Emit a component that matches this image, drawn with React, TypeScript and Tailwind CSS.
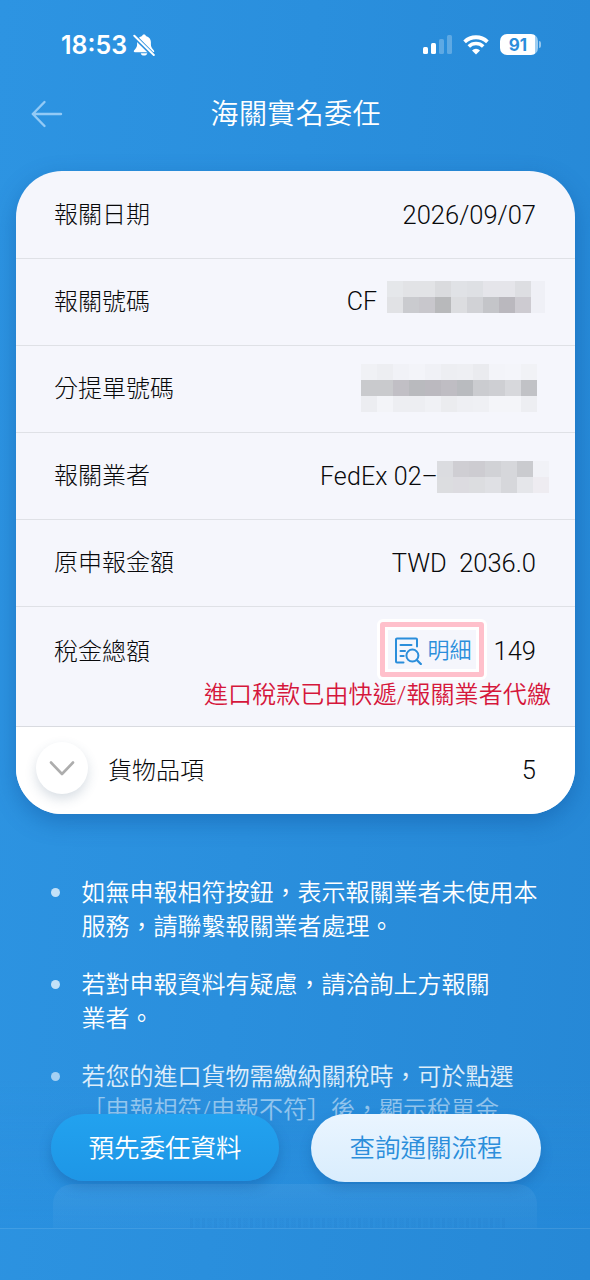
import type { ReactNode } from 'react';

const MASK_DECLARATION = [
  ['#e5e7ea', '#e2e3e6', '#e2e3e6', '#dadbde', '#e0e2e6', '#dee0e4', '#e5e5ea', '#e5e5ea', '#dddee2', '#eff0f6'],
  ['#e1e2e5', '#cacbcf', '#c8c7cc', '#b8b9bb', '#dcdde0', '#d1d2d6', '#c4c5c9', '#bab8be', '#cdcbd1', '#eff0f6'],
];

const MASK_WAYBILL = [
  ['#f0f1f5', '#edeef2', '#f1f2f7', '#f3f4f9', '#f0f1f6', '#edeef2', '#eeeff3', '#eaebef', '#f3f4f9', '#f4f5fa', '#f1f2f6'],
  ['#c9cacd', '#c9cacd', '#c1bfc5', '#b9babe', '#bbb9bf', '#bfbdc3', '#b9bbbf', '#cbccd0', '#cecfd3', '#d7d8dc', '#c1c2c6'],
  ['#ecedf1', '#f3f4f8', '#edeef2', '#edeef2', '#f0f1f5', '#ebecef', '#eeeff3', '#eff0f4', '#f4f5f9', '#f4f5f9', '#edeef2'],
];

const MASK_BROKER = [
  ['#dbdce0', '#cfced3', '#cdccd1', '#d1d2d6', '#d6d7db', '#cacbcf', '#f1f2f7'],
  ['#dcdde0', '#dcdbe0', '#dcdde0', '#dfe0e4', '#d6d7db', '#e5e6ea', '#eeecf1'],
];

function Mosaic({ rows, lastNarrow, className = '' }: { rows: string[][]; lastNarrow?: boolean; className?: string }) {
  return (
    <span className={`block shrink-0 ${className}`}>
      {rows.map((row, y) => (
        <span key={y} className="flex">
          {row.map((color, x) => (
            <span
              key={x}
              className={`block h-4 ${lastNarrow && x === row.length - 1 ? 'w-3.5' : 'w-4'}`}
              style={{ backgroundColor: color }}
            />
          ))}
        </span>
      ))}
    </span>
  );
}

function Row({ label, children, className = 'pr-[39px]' }: { label: string; children: ReactNode; className?: string }) {
  return (
    <div className={`flex h-[87px] items-center justify-between border-b border-[#dfe1e6] pl-[38.5px] ${className}`}>
      <span className="text-[24px] leading-8">{label}</span>
      <div className="flex items-center text-[25.5px] leading-8 whitespace-pre">{children}</div>
    </div>
  );
}

function StatusBar() {
  return (
    <div className="flex h-[88px] items-center pl-[61px] pr-[49px] pt-px text-white">
      <span className="font-[Inter] text-[25px] font-semibold leading-8">18:53</span>
      <svg className="ml-[6px]" width="22" height="22" viewBox="0 0 22 22" fill="currentColor">
        <path d="M11 0.5c-1.200 0-1.800.7-1.900 1.500C5.800 2.800 4.200 5.200 4.100 8v2.500c0 2.200-.9 3.500-2.400 5.200-.8.900-1 1.300-.9 1.900.1.500.5.700 1.200.7h18c.7 0 1.200-.2 1.200-.8 0-.5-.2-.9-.9-1.700-1.500-1.700-2.400-3-2.400-5.300V8c-.1-2.800-1.700-5.200-5-6C12.800 1.200 12.200.5 11 .5zM7.700 19.300h6.600c-.3 1.400-1.600 2.300-3.300 2.300s-3-.9-3.300-2.300z" />
        <path d="M0 0.800 21.200 22" stroke="#2b90df" strokeWidth="4.400" />
        <path d="M1.300 1.800 20.800 21" stroke="currentColor" strokeWidth="2" strokeLinecap="round" />
      </svg>
      <div className="ml-auto flex items-center">
        <div className="flex h-[19px] items-end gap-[2.500px]">
          <span className="h-[7px] w-[5.500px] rounded-[1.500px] bg-white" />
          <span className="h-[11px] w-[5.500px] rounded-[1.500px] bg-white" />
          <span className="h-[15px] w-[5.500px] rounded-[1.500px] bg-white/25" />
          <span className="h-[19px] w-[5.500px] rounded-[1.500px] bg-white/25" />
        </div>
        <svg className="ml-[11px]" width="26" height="20" viewBox="0 0 26 20" fill="none" stroke="currentColor">
          <path d="M1.600 6.800a16.600 16.600 0 0 1 22.800 0" strokeWidth="3.800" />
          <path d="M5.800 11.500a10.300 10.300 0 0 1 14.400 0" strokeWidth="3.600" />
          <path d="M13 19.500 9 15.400a5.600 5.600 0 0 1 8 0z" fill="currentColor" stroke="none" />
        </svg>
        <div className="ml-[11px] flex h-[21px] w-[38px] items-center justify-center rounded-[7px] bg-[linear-gradient(90deg,#fff_91%,#9dcdf1_91%)] pr-0.5 pt-px font-[Inter] text-[17px] font-bold leading-[20px] text-[#2a8ddb]">
          91
        </div>
        <span className="ml-[1px] h-[7px] w-[2px] rounded-r-full bg-white/50" />
      </div>
    </div>
  );
}

function DetailIcon() {
  return (
    <svg width="28" height="28" viewBox="0 0 28 28" fill="none" stroke="currentColor" strokeWidth="2" strokeLinecap="round" strokeLinejoin="round">
      <path d="M9.500 25.500H3a1 1 0 0 1-1-1V2.500a1 1 0 0 1 1-1h19a1 1 0 0 1 1 1V9.500" />
      <path d="M6.500 8h11M6.500 14h4.500M6.500 19h3.200" />
      <circle cx="18.400" cy="18.600" r="6" />
      <path d="m22.800 23 4 4" strokeWidth="2.300" />
    </svg>
  );
}

function Note({ lines, className = '', dot = 'bg-[#c3e1f8]' }: { lines: ReactNode[]; className?: string; dot?: string }) {
  return (
    <li className={`flex ${className}`}>
      <span className={`mt-[12px] h-[9px] w-[9px] shrink-0 rounded-full ${dot}`} />
      <p className="ml-[21.500px] text-[24px] leading-[34px] whitespace-nowrap">
        {lines.map((line, i) => (
          <span key={i} className="block">{line}</span>
        ))}
      </p>
    </li>
  );
}

export default function App() {
  return (
    <div className="relative h-[1280px] w-[590px] overflow-hidden bg-[linear-gradient(95deg,#2d94e2_0%,#2a8fdd_45%,#2688d6_100%)] font-['Roboto','Noto_Sans_CJK_TC',sans-serif] font-light text-[#08090b]">
      <StatusBar />

      <header className="flex h-[50px] items-center pl-[31px] pt-[2px] text-white">
        <svg width="32" height="28" viewBox="0 0 32 28" fill="none" stroke="#93caf6" strokeWidth="2.400" strokeLinecap="round" strokeLinejoin="round">
          <path d="M30 14H1.800M13.500 2 1.800 14l11.700 12" />
        </svg>
        <h1 className="ml-[147.500px] pt-px text-[28px] font-[350] leading-10 tracking-[0.400px]">海關實名委任</h1>
      </header>

      <main className="ml-[15.500px] mt-[33px] w-[559.500px] overflow-hidden rounded-[46px] bg-[#f5f6fc] pt-px shadow-[0_8px_22px_rgba(10,70,140,0.350)]">
        <Row label="報關日期">2026/09/07</Row>
        <Row label="報關號碼" className="pr-[30px]">
          <span className="mr-[10px] text-[25px]">CF</span>
          <Mosaic rows={MASK_DECLARATION} lastNarrow className="-mt-[11px]" />
        </Row>
        <Row label="分提單號碼" className="pr-[38px]">
          <Mosaic rows={MASK_WAYBILL} className="-mt-[2px]" />
        </Row>
        <Row label="報關業者" className="pr-[26px]">
          <span className="-mr-[1px] pt-[2px] text-[25px] tracking-[0.100px]">FedEx 02–</span>
          <Mosaic rows={MASK_BROKER} className="mt-[2px]" />
        </Row>
        <Row label="原申報金額">TWD  2036.0</Row>

        <div className="h-[120px] border-b border-[#d9dbe0]">
          <div className="flex h-[87px] items-center pl-[38.5px] pr-[39px]">
            <span className="pt-[2px] text-[24px] leading-8">稅金總額</span>
            <div className="-mt-[3px] ml-auto mr-[7px] rounded-[6px] bg-white p-[3px]">
              <button className="flex h-[55px] w-[104px] items-center rounded-[3px] border-[5px] border-[#ffc0cb] bg-[#f5f6fc] pl-[9px] pt-[3px] text-[#2b8edb] shadow-[inset_0_0_0_3px_#fff]">
                <DetailIcon />
                <span className="ml-[6px] pt-px text-[22px] font-[350] leading-8">明細</span>
              </button>
            </div>
            <span className="pt-px text-[25.5px]">149</span>
          </div>
          <p className="-mt-[15px] pr-[24px] text-right text-[24px] font-[350] leading-8 tracking-[0.100px] text-[#d5173b]">進口稅款已由快遞/報關業者代繳</p>
        </div>

        <div className="flex h-[87px] items-center bg-white pl-[20.5px] pr-[39px]">
          <button className="-mt-[6px] flex h-[52px] w-[52px] items-center justify-center rounded-full bg-white shadow-[0_5px_12px_rgba(60,90,120,0.200)]">
            <svg width="26" height="16" viewBox="0 0 26 16" fill="none" stroke="#adadad" strokeWidth="2.600" strokeLinecap="round" strokeLinejoin="round">
              <path d="m2 2.500 11 11.500L24 2.500" />
            </svg>
          </button>
          <span className="ml-[20px] text-[24px] leading-8">貨物品項</span>
          <span className="ml-auto text-[25.5px]">5</span>
        </div>
      </main>

      <ul className="ml-[51px] mt-[62px] space-y-[24px] font-[350] text-white">
        <Note lines={['如無申報相符按鈕，表示報關業者未使用本', '服務，請聯繫報關業者處理。']} />
        <Note lines={['若對申報資料有疑慮，請洽詢上方報關', '業者。']} />
        <Note
          className="text-white/85"
          dot="bg-[#a5d0f3]"
          lines={['若您的進口貨物需繳納關稅時，可於點選', <span className="-mt-px block opacity-60">［申報相符/申報不符］後，顯示稅單金</span>]}
        />
      </ul>

      {/* Footer actions float over the scrolling notes */}
      <footer className="absolute inset-x-0 top-[1080px] h-[149px] overflow-hidden border-b border-white/10 bg-[linear-gradient(180deg,transparent,rgba(30,135,220,0.200))]">
        <div className="absolute left-[53px] top-[104px] h-[45px] w-[484px] rounded-t-[20px] bg-[linear-gradient(180deg,rgba(255,255,255,0.060),rgba(255,255,255,0.020))]">
          {/* last line of the panel, almost faded out */}
          <div className="ml-[137px] mt-[34px] h-[11px] w-[315px] bg-[repeating-linear-gradient(90deg,rgba(20,100,180,0.120)_0_3px,transparent_3px_5px,rgba(20,100,180,0.080)_5px_10px,transparent_10px_12px)] opacity-70" />
        </div>
        <div className="flex gap-[32px] px-[51px] pt-[34px]">
          <button className="h-[67px] w-[228px] shrink-0 rounded-full bg-linear-to-b from-[#22a2ef] to-[#1e96e6] pt-[2px] text-[25.500px] font-[350] text-white shadow-[0_6px_12px_rgba(15,80,150,0.350)]">
            預先委任資料
          </button>
          <button className="h-[68px] w-[230px] shrink-0 rounded-full bg-linear-to-b from-[#eaf5ff] to-[#d9edfd] pt-[1px] text-[25.500px] font-[350] text-[#2b8edb] shadow-[0_6px_12px_rgba(15,80,150,0.300)]">
            查詢通關流程
          </button>
        </div>
      </footer>
    </div>
  );
}
